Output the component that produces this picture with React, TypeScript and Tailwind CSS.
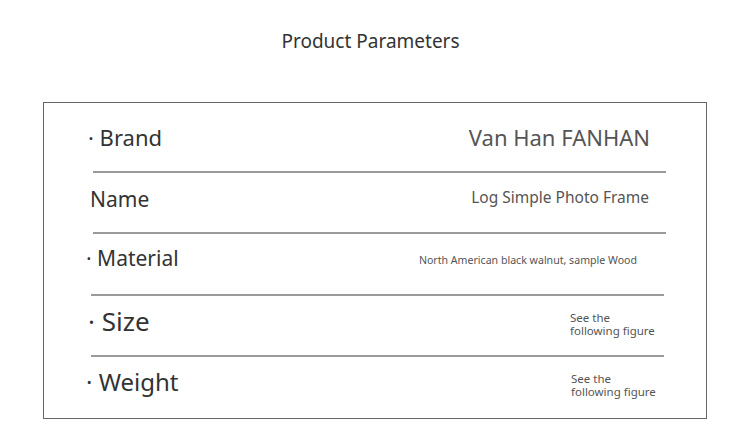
import React from "react";

const Line = ({ ml, w }: { ml: string; w: string }) => (
  <div className={`h-[2px] bg-[#9a9a9a] ${ml} ${w}`} />
);

const Figure = () => (
  <div className="text-[11.5px] leading-[13px] text-[#555] mt-[6px] w-[86px] whitespace-nowrap flex flex-col">
    <div className="h-[13px]">See the</div>
    <div className="h-[13px]">following figure</div>
  </div>
);

export default function App() {
  return (
    <div
      className="w-[750px] h-[445px] bg-white overflow-hidden"
      style={{ fontFamily: '"Noto Sans", "Open Sans", sans-serif' }}
    >
      <div className="pt-[27px] h-[102px] pr-[9px] text-center text-[19px] leading-[28px] text-[#333]">
        Product Parameters
      </div>
      <div className="ml-[43px] w-[664px] h-[317px] border border-[#666] flex flex-col">
        {/* Brand */}
        <div className="h-[68px] flex items-center justify-between pl-[44px] pr-[56px]">
          <span className="text-[22px] text-[#333]">· Brand</span>
          <span className="text-[22px] text-[#555]">Van Han FANHAN</span>
        </div>
        <Line ml="ml-[49px]" w="w-[573px]" />
        {/* Name */}
        <div className="h-[59px] flex items-center justify-between pl-[46px] pr-[57px] pb-[5px]">
          <span className="text-[21px] text-[#333]">Name</span>
          <span className="text-[15.5px] text-[#555] mb-[4px]">Log Simple Photo Frame</span>
        </div>
        <Line ml="ml-[49px]" w="w-[573px]" />
        {/* Material */}
        <div className="h-[60px] flex items-center justify-between pl-[42px] pr-[69px] pb-[10px]">
          <span className="text-[21px] text-[#333]">· Material</span>
          <span className="text-[10.6px] text-[#555] mt-[4px]">North American black walnut, sample Wood</span>
        </div>
        <Line ml="ml-[47px]" w="w-[573px]" />
        {/* Size */}
        <div className="h-[59px] flex items-center justify-between pl-[44px] pr-[50px] pb-[9px]">
          <span className="text-[26px] text-[#333]">· Size</span>
          <Figure />
        </div>
        <Line ml="ml-[47px]" w="w-[573px]" />
        {/* Weight */}
        <div className="h-[61px] flex items-center justify-between pl-[42px] pr-[49px] pb-[11px]">
          <span className="text-[24px] text-[#333]">· Weight</span>
          <Figure />
        </div>
      </div>
    </div>
  );
}
